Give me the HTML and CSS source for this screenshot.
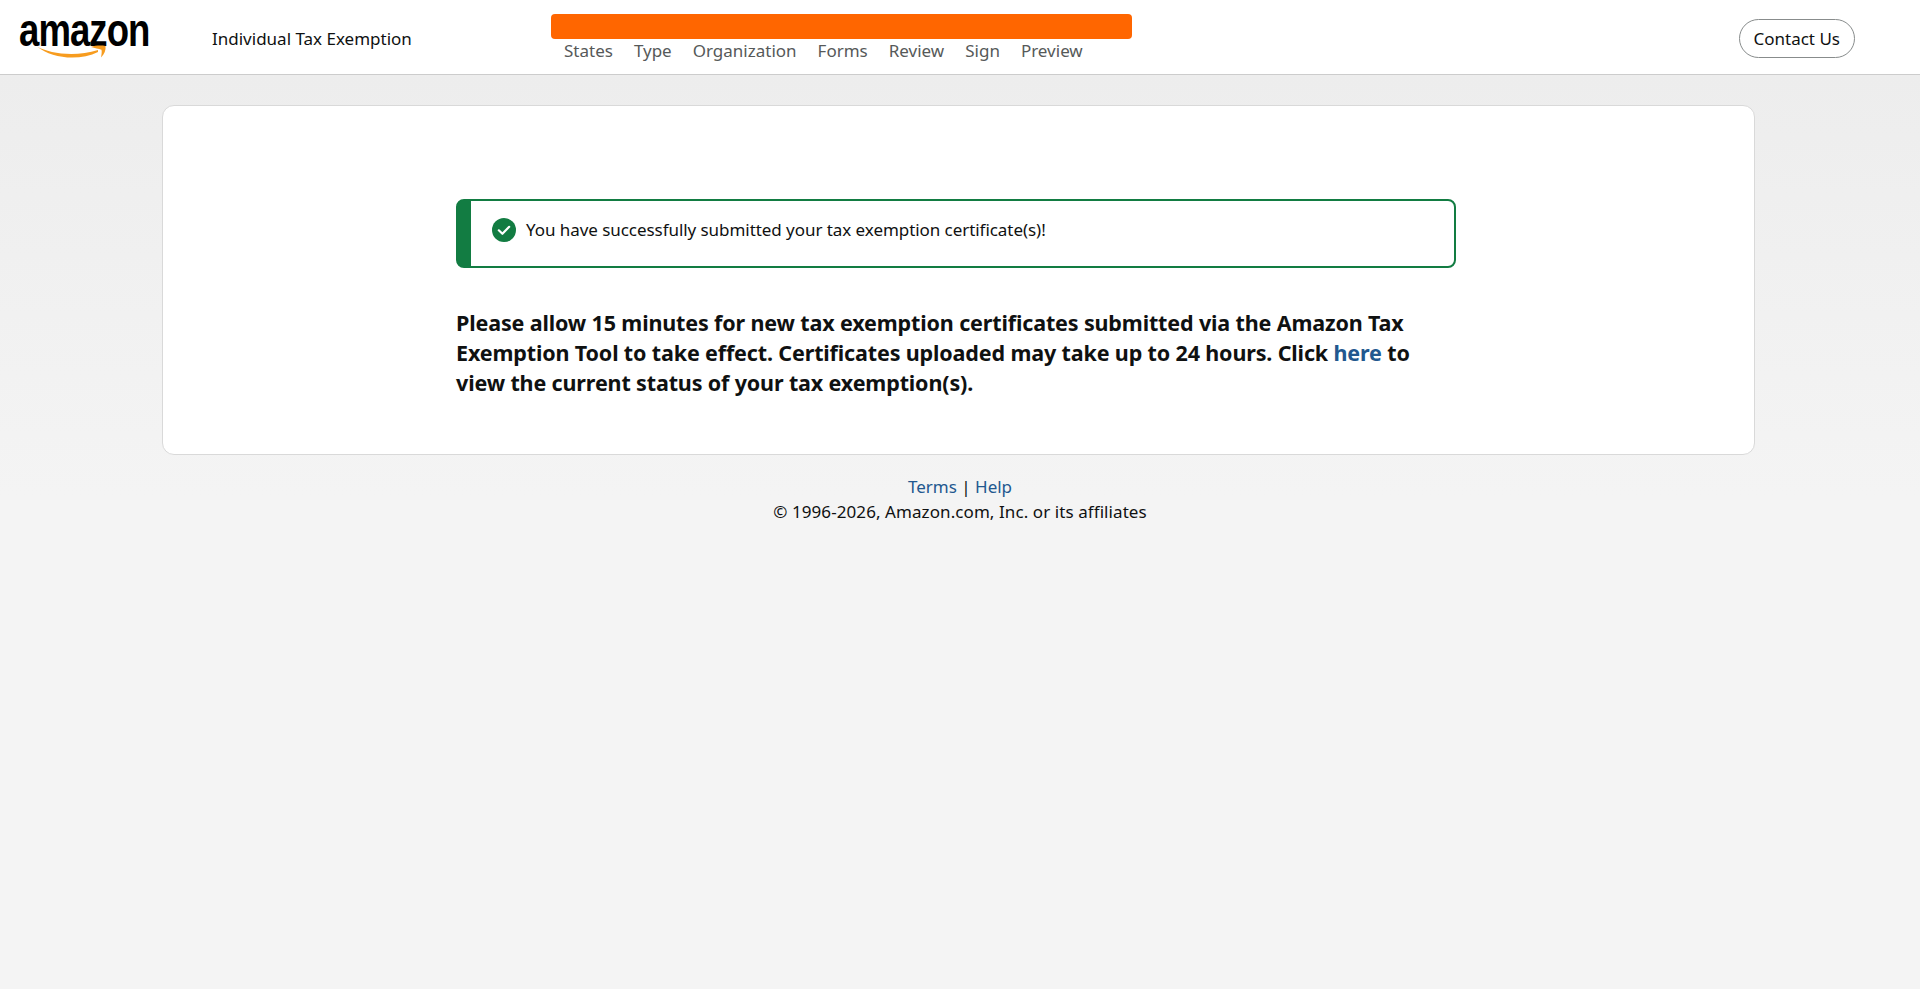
FILE: index.html
```html
<!DOCTYPE html>
<html lang="en">
<head>
<meta charset="utf-8">
<title>Individual Tax Exemption</title>
<link rel="stylesheet" href="styles.css">
</head>
<body>
<header class="topbar">
  <div class="logo">
    <span class="logo-word">amazon</span>
    <svg class="logo-smile" viewBox="0 0 72 16" width="72" height="16" aria-hidden="true">
      <path d="M1 1.500 C14 9 40 12 62 5 L62 7 C44 16 16 14 1 1.500 Z" fill="#f79c1f"/>
      <path d="M55 2 C59 0.500 65 0.300 69.500 1 C70 5 68.500 9 65 12.500 C65.500 9.500 66 7 65.500 4.800 C62.500 3.800 59 3.300 55 2 Z" fill="#f79c1f"/>
    </svg>
  </div>
  <div class="app-title">Individual Tax Exemption</div>
  <div class="progress">
    <div class="progress-bar"></div>
    <nav class="steps">
      <span>States</span><span>Type</span><span>Organization</span><span>Forms</span><span>Review</span><span>Sign</span><span>Preview</span>
    </nav>
  </div>
  <a class="contact" href="#">Contact Us</a>
</header>
<main class="page">
  <section class="card">
    <div class="content">
      <div class="alert">
        <svg class="alert-icon" viewBox="0 0 24 24" width="24" height="24" aria-hidden="true">
          <circle cx="12" cy="12" r="12" fill="#127c42"/>
          <path d="M6.800 12.300 L10.400 15.800 L17.200 8.800" fill="none" stroke="#fff" stroke-width="2.200" stroke-linecap="round" stroke-linejoin="round"/>
        </svg>
        <span class="alert-text">You have successfully submitted your tax exemption certificate(s)!</span>
      </div>
      <h1 class="notice">Please allow 15 minutes for new tax exemption certificates submitted via the Amazon Tax Exemption Tool to take effect. Certificates uploaded may take up to 24 hours. Click <a href="#">here</a> to view the current status of your tax exemption(s).</h1>
    </div>
  </section>
  <footer class="footer">
    <div><a href="#">Terms</a> | <a href="#">Help</a></div>
    <div class="copyright">© 1996-2026, Amazon.com, Inc. or its affiliates</div>
  </footer>
</main>
</body>
</html>
```
FILE: styles.css
```css
* { box-sizing: border-box; }
html, body { height: 100%; }
body {
  margin: 0;
  font-family: "Noto Sans", "Open Sans", sans-serif;
  font-size: 17px;
  color: #0f1111;
  background: #f4f4f4;
}
a { color: #22588f; text-decoration: none; }

.topbar {
  display: flex;
  align-items: center;
  height: 75px;
  background: #fff;
  border-bottom: 1px solid #ccc;
  padding-left: 19px;
}
.logo {
  position: relative;
  width: 131px;
  height: 42px;
  flex: none;
  margin-top: -2px;
}
.logo-word {
  display: block;
  width: max-content;
  font-family: "Liberation Sans", Arial, sans-serif;
  font-weight: 700;
  font-size: 46px;
  line-height: 30px;
  letter-spacing: -1.2px;
  color: #000;
  transform: scaleX(0.795);
  transform-origin: left center;
}
.logo-smile { position: absolute; left: 17px; top: 30px; }
.app-title { margin-left: 62px; width: 339px; padding-top: 2px; flex: none; color: #0f1111; }
.progress { width: 581px; flex: none; align-self: flex-start; padding-top: 14px; }
.progress-bar { height: 25px; background: #ff6600; border-radius: 4px; }
.steps {
  display: flex;
  gap: 21px;
  padding-left: 13px;
  color: #565959;
  line-height: 23px;
}
.contact {
  margin-left: auto;
  margin-right: 65px;
  margin-top: 2px;
  height: 39px;
  padding: 0 14px;
  display: flex;
  align-items: center;
  border: 1px solid #888c8c;
  border-radius: 20px;
  color: #0f1111;
  background: #fff;
}

.page {
  background: linear-gradient(#ededed, #f4f4f4 420px);
  min-height: 914px;
  padding-top: 30px;
}
.card {
  width: 1593px;
  height: 350px;
  margin-left: 162px;
  background: #fff;
  border: 1px solid #d9d9d9;
  border-radius: 12px;
}
.content { width: 1000px; margin-left: 293px; padding-top: 93px; }
.alert {
  display: flex;
  align-items: flex-start;
  gap: 10px;
  height: 69px;
  padding: 17px 0 0 21px;
  border: 2px solid #127c42;
  border-left-width: 15px;
  border-radius: 8px;
  line-height: 24px;
}
.alert-icon { flex: none; }
.alert-text { letter-spacing: -0.055px; }
.notice {
  margin: 40px 0 0;
  font-size: 21.5px;
  font-weight: 700;
  letter-spacing: -0.14px;
  line-height: 30px;
  color: #0f1111;
}
.footer {
  margin-top: 19px;
  text-align: center;
  line-height: 25px;
  color: #0f1111;
}
.copyright { letter-spacing: 0.08px; }
```
